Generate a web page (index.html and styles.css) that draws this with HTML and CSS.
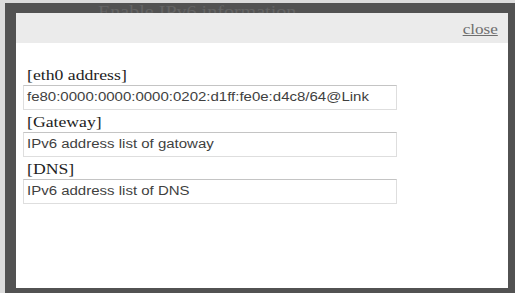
FILE: index.html
```html
<!DOCTYPE html>
<html>
<head>
<meta charset="utf-8">
<link rel="stylesheet" href="styles.css">
</head>
<body>
<div class="frame">
  <div class="under"><span>Enable IPv6 information</span></div>
  <div class="dialog">
    <div class="header"><a class="close" href="#"><span class="wide">close</span></a></div>
    <div class="content">
      <div class="label"><span class="wide">[eth0 address]</span></div>
      <div class="field"><span class="wide2">fe80:0000:0000:0000:0202:d1ff:fe0e:d4c8/64@Link</span></div>
      <div class="label"><span class="wide">[Gateway]</span></div>
      <div class="field"><span class="wide2">IPv6 address list of gatoway</span></div>
      <div class="label"><span class="wide">[DNS]</span></div>
      <div class="field"><span class="wide2">IPv6 address list of DNS</span></div>
    </div>
  </div>
</div>
</body>
</html>
```
FILE: styles.css
```css
html, body {
  margin: 0;
  padding: 0;
  background: #dcdcdc;
}
body {
  width: 515px;
  height: 293px;
  overflow: hidden;
}
.frame {
  margin: 3px 0 0 5px;
  height: 290px;
  background: #525252;
  padding: 0 7px 0 11px;
  box-sizing: border-box;
  display: flex;
  flex-direction: column;
}
.under {
  height: 10px;
  overflow: hidden;
  padding-left: 82px;
}
.under span {
  display: inline-block;
  margin-top: -10px;
  font: 17px "Liberation Serif", serif;
  color: #646464;
  transform: scaleX(1.18);
  transform-origin: left center;
}
.dialog {
  width: 492px;
  height: 275px;
  background: #fff;
  display: flex;
  flex-direction: column;
}
.header {
  height: 30px;
  background: #ebebeb;
  display: flex;
  justify-content: flex-end;
  align-items: center;
  padding-right: 10px;
}
.close {
  font: 14.5px "Liberation Serif", serif;
  color: #6e6e6e;
  text-decoration: underline;
  margin-top: 2px;
}
.wide {
  display: inline-block;
  transform: scaleX(1.18);
  transform-origin: left center;
}
.close .wide {
  transform-origin: right center;
  text-decoration: underline;
}
.wide2 {
  display: inline-block;
  transform: scaleX(1.2);
  transform-origin: left center;
}
.content {
  padding: 20px 0 0 7px;
  display: flex;
  flex-direction: column;
}
.label {
  font: 15px "Liberation Serif", serif;
  color: #222;
  height: 22px;
  line-height: 24px;
  padding-left: 4px;
}
.field {
  width: 374px;
  height: 25px;
  box-sizing: border-box;
  border: 1px solid #dedede;
  border-top-color: #c4c4c4;
  padding: 0 0 0 3px;
  font: 12.5px "Liberation Sans", Arial, sans-serif;
  color: #3f3f3f;
  line-height: 23px;
}
```
